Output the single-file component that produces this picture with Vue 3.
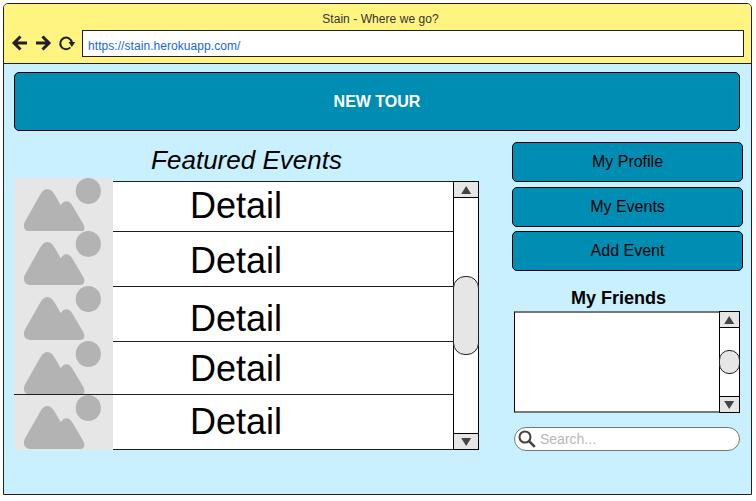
<script setup>
const events = [
  { id: 1, height: 50, shift: 0 },
  { id: 2, height: 55, shift: 5 },
  { id: 3, height: 55, shift: 8 },
  { id: 4, height: 53, shift: 3 },
  { id: 5, height: 55, shift: 3 },
]
const tiles = [53, 55, 55, 54, 55]
const actions = ['My Profile', 'My Events', 'Add Event']
</script>

<template>
  <div class="window">
    <header class="chrome">
      <div class="title">Stain - Where we go?</div>
      <div class="toolbar">
        <svg class="nav" width="70" height="18" viewBox="0 0 70 18">
          <g fill="none" stroke="#231f20" stroke-width="3">
            <path d="M17 9H4.500M10.500 2.500L4 9l6.500 6.500" />
            <path d="M26 9h12.500M32.500 2.500L39 9l-6.500 6.500" />
            <path d="M60.300 13.400A5.800 5.800 0 1 1 61.800 8.500" stroke-width="2" />
          </g>
          <path d="M58.600 8h6.600l-3.400 5z" fill="#231f20" />
        </svg>
        <div class="url">https://stain.herokuapp.com/</div>
      </div>
    </header>

    <main class="page">
      <button class="btn tour">NEW TOUR</button>
      <div class="columns">
        <section class="featured">
          <h1>Featured Events</h1>
          <div class="event-list">
            <div class="pictures">
              <div v-for="(h, i) in tiles" :key="i" class="tile" :class="{ ruled: i === 3 }" :style="{ height: h + 'px' }">
                <svg width="99" height="55" viewBox="0 0 99 55" fill="#b3b3b3">
                  <ellipse cx="74.300" cy="13" rx="12.600" ry="13" />
                  <path d="M11 43.500L25.700 17.500C28 13.200 30 11 33.200 11C36.500 11 38.500 13 41 17.200L46.800 27.300C48.500 24.500 50 23.200 52.500 23.200C55 23.200 56.800 24.800 58.300 27.500L69 45.500C72 51 69.800 54 66 54H17C10.500 54 8.300 48.500 11 43.500Z" />
                </svg>
              </div>
            </div>
            <div class="rows">
              <div v-for="e in events" :key="e.id" class="row" :style="{ height: e.height + 'px', paddingTop: e.shift + 'px' }">Detail</div>
            </div>
            <div class="scrollbar">
              <div class="arrow"><svg width="11" height="8"><path d="M5.200 0l5 8h-10z" /></svg></div>
              <div class="track"><div class="thumb"></div></div>
              <div class="arrow down"><svg width="11" height="8"><path d="M.2 0h10l-5 8z" /></svg></div>
            </div>
          </div>
        </section>

        <aside class="side">
          <button v-for="a in actions" :key="a" class="btn action">{{ a }}</button>
          <h2>My Friends</h2>
          <div class="friends">
            <div class="friend-list"></div>
            <div class="scrollbar small">
              <div class="arrow"><svg width="11" height="8"><path d="M5.200 0l5 8h-10z" /></svg></div>
              <div class="track"><div class="thumb"></div></div>
              <div class="arrow down"><svg width="11" height="8"><path d="M.2 0h10l-5 8z" /></svg></div>
            </div>
          </div>
          <div class="search">
            <svg width="18" height="18" viewBox="0 0 18 18" fill="none" stroke="#444">
              <circle cx="7" cy="7" r="5.500" stroke-width="2.100" />
              <path d="M10.800 10.800l6 6" stroke-width="2.600" />
            </svg>
            <span>Search...</span>
          </div>
        </aside>
      </div>
    </main>
  </div>
</template>

<style>
body { background: #fff; }
</style>

<style scoped>
* { box-sizing: border-box; }
.window {
  width: 749px;
  height: 492px;
  margin: 3px;
  border: 1px solid #231f20;
  border-radius: 5px 5px 0 0;
  background: #c9f0ff;
  overflow: hidden;
  font-family: "Liberation Sans", Arial, sans-serif;
  color: #000;
}
.chrome {
  height: 60px;
  background: #fff47f;
  border-bottom: 1px solid #231f20;
}
.title {
  height: 26px;
  padding-top: 4px;
  padding-left: 6px;
  line-height: 22px;
  text-align: center;
  font-size: 12px;
  letter-spacing: 0.06px;
  color: #333;
}
.toolbar { display: flex; padding: 0 7px 0 6px; }
.nav { flex: none; margin: 4px 2px 0 0; }
.url {
  flex: 1;
  height: 27px;
  padding: 2px 5px 0;
  border: 1px solid #231f20;
  background: #fff;
  font-size: 12px;
  letter-spacing: 0.06px;
  line-height: 26px;
  color: #1a66dd;
}
.page { padding: 8px 8px 0 10px; }
.btn {
  display: block;
  margin: 0;
  padding: 0;
  border: 1px solid #000;
  border-radius: 5px;
  background: #008db3;
  font: 16px "Liberation Sans", Arial, sans-serif;
  color: #000;
}
.tour { width: 726px; height: 59px; font-weight: bold; color: #fff; }
.columns { display: flex; gap: 33px; padding-top: 11px; }
.featured { width: 465px; }
h1 {
  height: 39px;
  margin: 0;
  padding: 3px 0 0;
  text-align: center;
  font-size: 26px;
  font-style: italic;
  font-weight: normal;
  line-height: 30px;
}
.event-list { display: flex; align-items: flex-start; }
.pictures { width: 99px; margin-top: -3px; }
.tile { overflow: hidden; background: #e6e6e6; }
.tile svg { display: block; }
.tile.ruled { border-bottom: 1px solid #231f20; }
.rows { width: 340px; border-bottom: 1px solid #231f20; background: #fff; }
.row {
  border-top: 1px solid #231f20;
  padding-left: 77px;
  font-size: 36px;
  line-height: 48px;
}
.scrollbar {
  display: flex;
  flex-direction: column;
  width: 26px;
  height: 269px;
  border: 1px solid #000;
  background: #fff;
}
.arrow {
  display: flex;
  align-items: center;
  justify-content: center;
  flex: none;
  height: 16px;
  border-bottom: 1px solid #000;
  background: #e6e6e6;
}
.arrow.down { border-bottom: 0; border-top: 1px solid #000; }
.arrow path { fill: #444; }
.track { flex: 1; padding-top: 78px; }
.thumb {
  height: 79px;
  margin: 0 -1px;
  border: 1px solid #222;
  border-radius: 12px;
  background: #e6e6e6;
}
.side { width: 231px; }
.action { width: 231px; height: 40px; margin-bottom: 5px; }
.action + .action + .action { margin-top: -1px; margin-bottom: 0; }
h2 {
  height: 40px;
  margin: 0;
  padding: 16px 18px 0 0;
  text-align: center;
  font-size: 18px;
  line-height: 22px;
}
.friends { display: flex; width: 226px; margin-left: 2px; }
.friend-list {
  flex: 1;
  height: 102px;
  border-left: 1px solid #000;
  border-top: 2px solid #777;
  border-bottom: 2px solid #777;
  background: #fff;
}
.scrollbar.small { width: 21px; height: 102px; }
.small .track { padding-top: 22px; }
.small .thumb { height: 24px; border-radius: 10px; }
.search {
  display: flex;
  align-items: center;
  gap: 4px;
  width: 226px;
  height: 24px;
  margin: 14px 0 0 2px;
  padding-left: 3px;
  border: 1px solid #777;
  border-radius: 12px;
  background: #fff;
  font-size: 14px;
  color: #b8b8b8;
}
</style>
